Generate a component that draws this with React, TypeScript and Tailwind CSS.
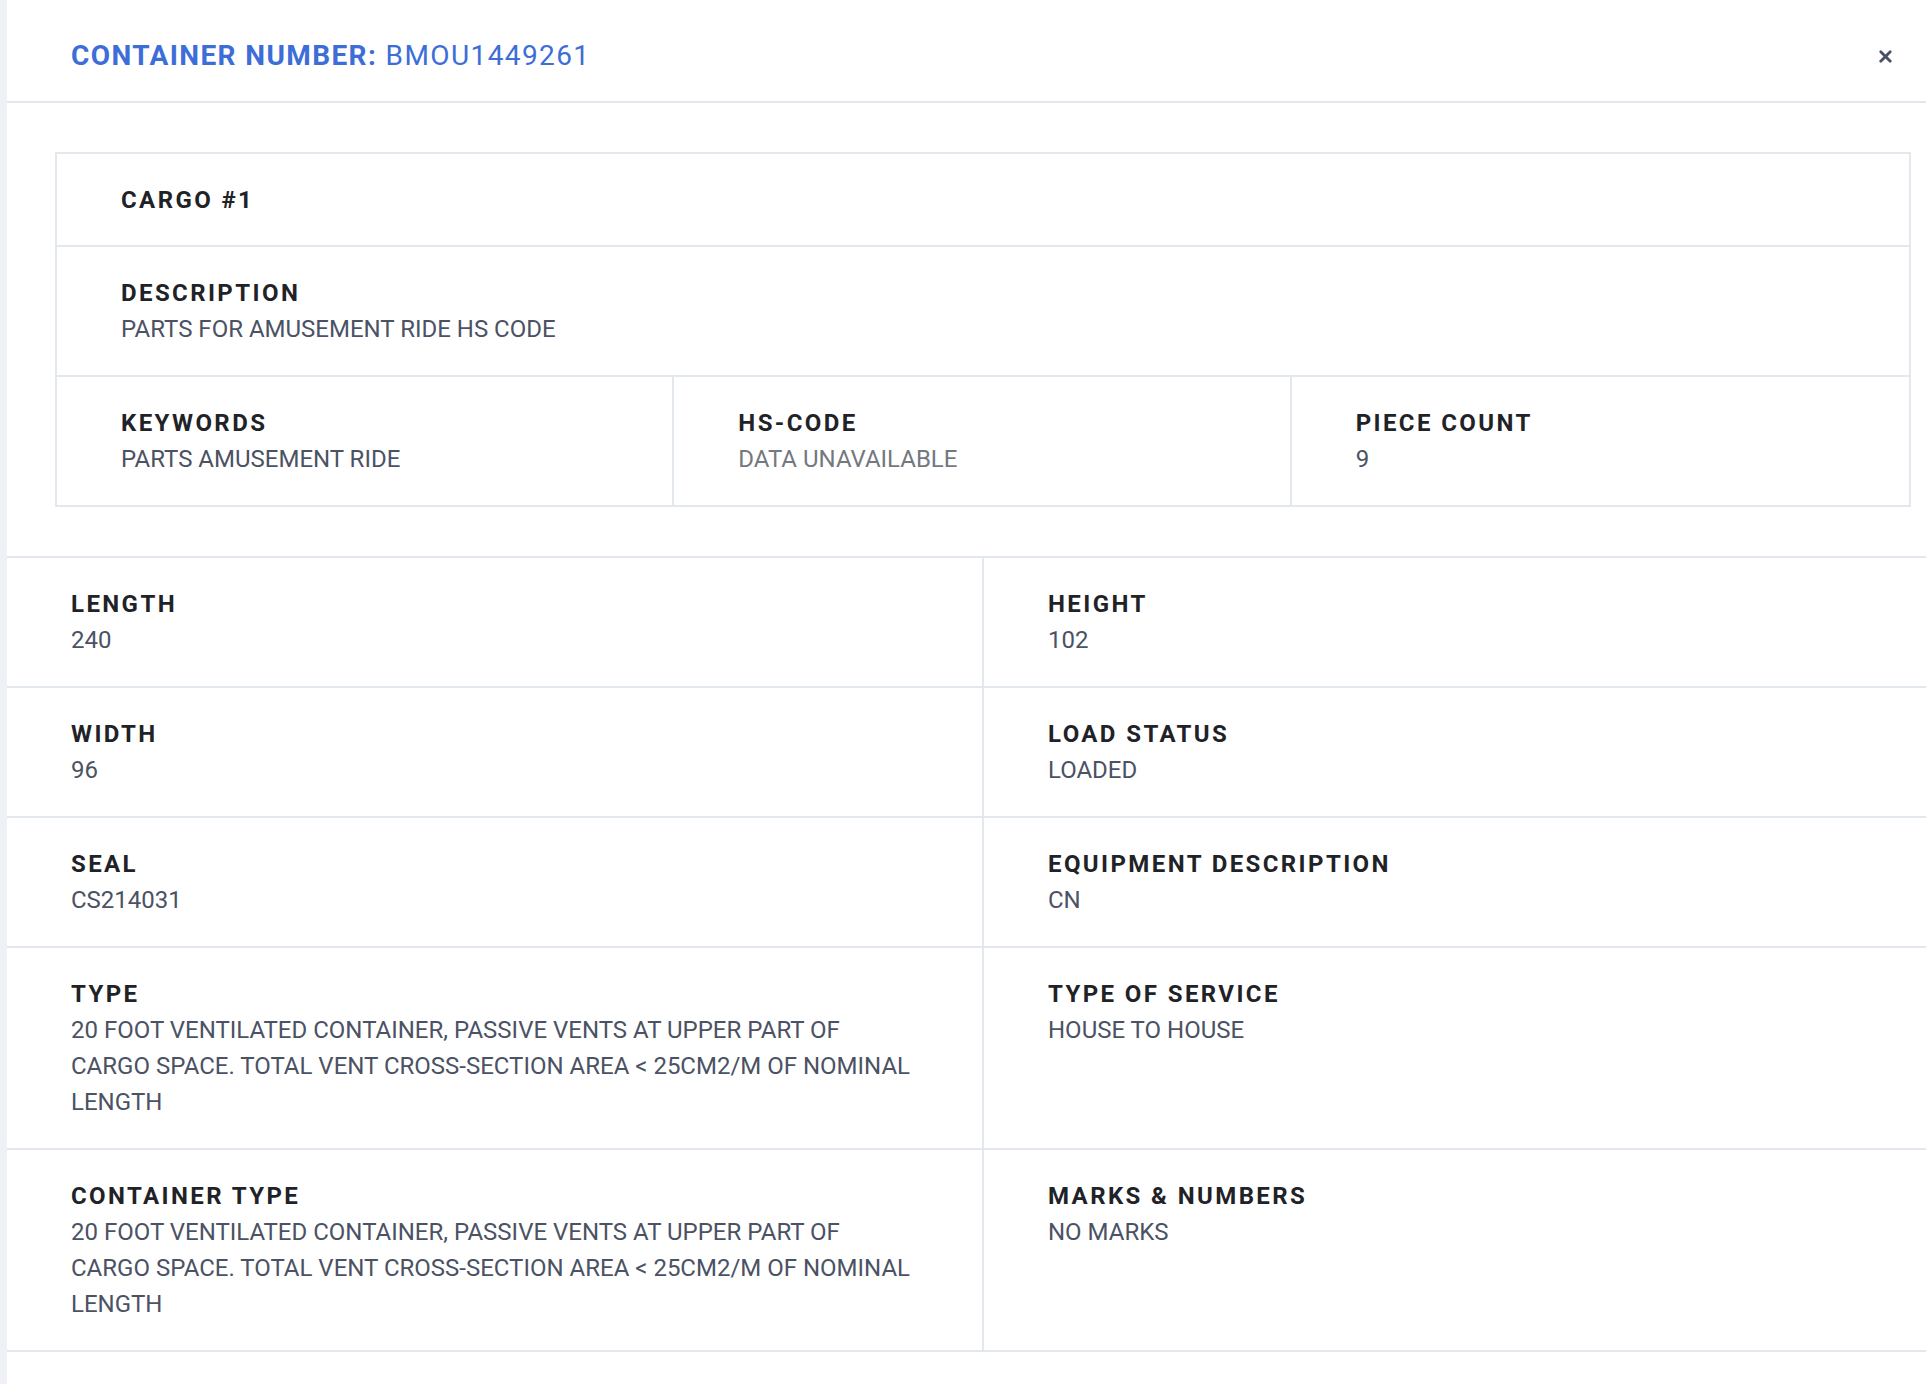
import { X } from "lucide-react";

type Field = { label: string; value: string; muted?: boolean };

const rows: [Field, Field][] = [
  [
    { label: "LENGTH", value: "240" },
    { label: "HEIGHT", value: "102" },
  ],
  [
    { label: "WIDTH", value: "96" },
    { label: "LOAD STATUS", value: "LOADED" },
  ],
  [
    { label: "SEAL", value: "CS214031" },
    { label: "EQUIPMENT DESCRIPTION", value: "CN" },
  ],
  [
    {
      label: "TYPE",
      value:
        "20 FOOT VENTILATED CONTAINER, PASSIVE VENTS AT UPPER PART OF CARGO SPACE. TOTAL VENT CROSS-SECTION AREA < 25CM2/M OF NOMINAL LENGTH",
    },
    { label: "TYPE OF SERVICE", value: "HOUSE TO HOUSE" },
  ],
  [
    {
      label: "CONTAINER TYPE",
      value:
        "20 FOOT VENTILATED CONTAINER, PASSIVE VENTS AT UPPER PART OF CARGO SPACE. TOTAL VENT CROSS-SECTION AREA < 25CM2/M OF NOMINAL LENGTH",
    },
    { label: "MARKS & NUMBERS", value: "NO MARKS" },
  ],
];

function Item({ label, value, muted }: Field) {
  return (
    <div>
      <div className="text-[24px] font-bold leading-[36px] tracking-[0.1em] text-[#1f2327]">
        {label}
      </div>
      <div
        className={
          muted
            ? "text-[24px] leading-[36px] text-[#74787f]"
            : "text-[24px] leading-[36px] text-[#4b5264]"
        }
      >
        {value}
      </div>
    </div>
  );
}

export default function App() {
  return (
    <div className="flex min-h-[1384px] bg-[#eef1f5] font-['Roboto',sans-serif]">
      <div className="ml-[7px] flex-1 bg-white">
        <header className="flex h-[103px] items-start justify-between border-b-2 border-[#e3e7ee] pt-[38px] pr-[31px] pl-16">
          <h1 className="text-[28px] leading-[36px] tracking-wider text-[#3d6dd6]">
            <span className="font-bold">CONTAINER NUMBER:</span> BMOU1449261
          </h1>
          <div className="flex h-[36px] items-center">
            <X className="h-[19px] w-[19px] text-[#4a5066]" strokeWidth={3.5} />
          </div>
        </header>

        <section className="mt-[49px] mr-[15px] ml-[48px] border-2 border-[#e3e7ee]">
          <div className="flex h-[93px] items-center border-b-2 border-[#e3e7ee] px-16">
            <span className="text-[24px] font-bold tracking-[0.1em] text-[#1f2327]">
              CARGO #1
            </span>
          </div>
          <div className="border-b-2 border-[#e3e7ee] px-16 py-[28px]">
            <Item label="DESCRIPTION" value="PARTS FOR AMUSEMENT RIDE HS CODE" />
          </div>
          <div className="grid grid-cols-3">
            <div className="border-r-2 border-[#e3e7ee] px-16 py-[28px]">
              <Item label="KEYWORDS" value="PARTS AMUSEMENT RIDE" />
            </div>
            <div className="border-r-2 border-[#e3e7ee] px-16 py-[28px]">
              <Item label="HS-CODE" value="DATA UNAVAILABLE" muted />
            </div>
            <div className="px-16 py-[28px]">
              <Item label="PIECE COUNT" value="9" />
            </div>
          </div>
        </section>

        <section className="mt-[49px] grid grid-cols-[977px_1fr] border-t-2 border-[#e3e7ee]">
          {rows.map(([left, right]) => (
            <div key={left.label} className="contents">
              <div className="border-r-2 border-b-2 border-[#e3e7ee] py-[28px] pr-[60px] pl-16">
                <Item {...left} />
              </div>
              <div className="border-b-2 border-[#e3e7ee] px-16 py-[28px]">
                <Item {...right} />
              </div>
            </div>
          ))}
        </section>
      </div>
    </div>
  );
}
